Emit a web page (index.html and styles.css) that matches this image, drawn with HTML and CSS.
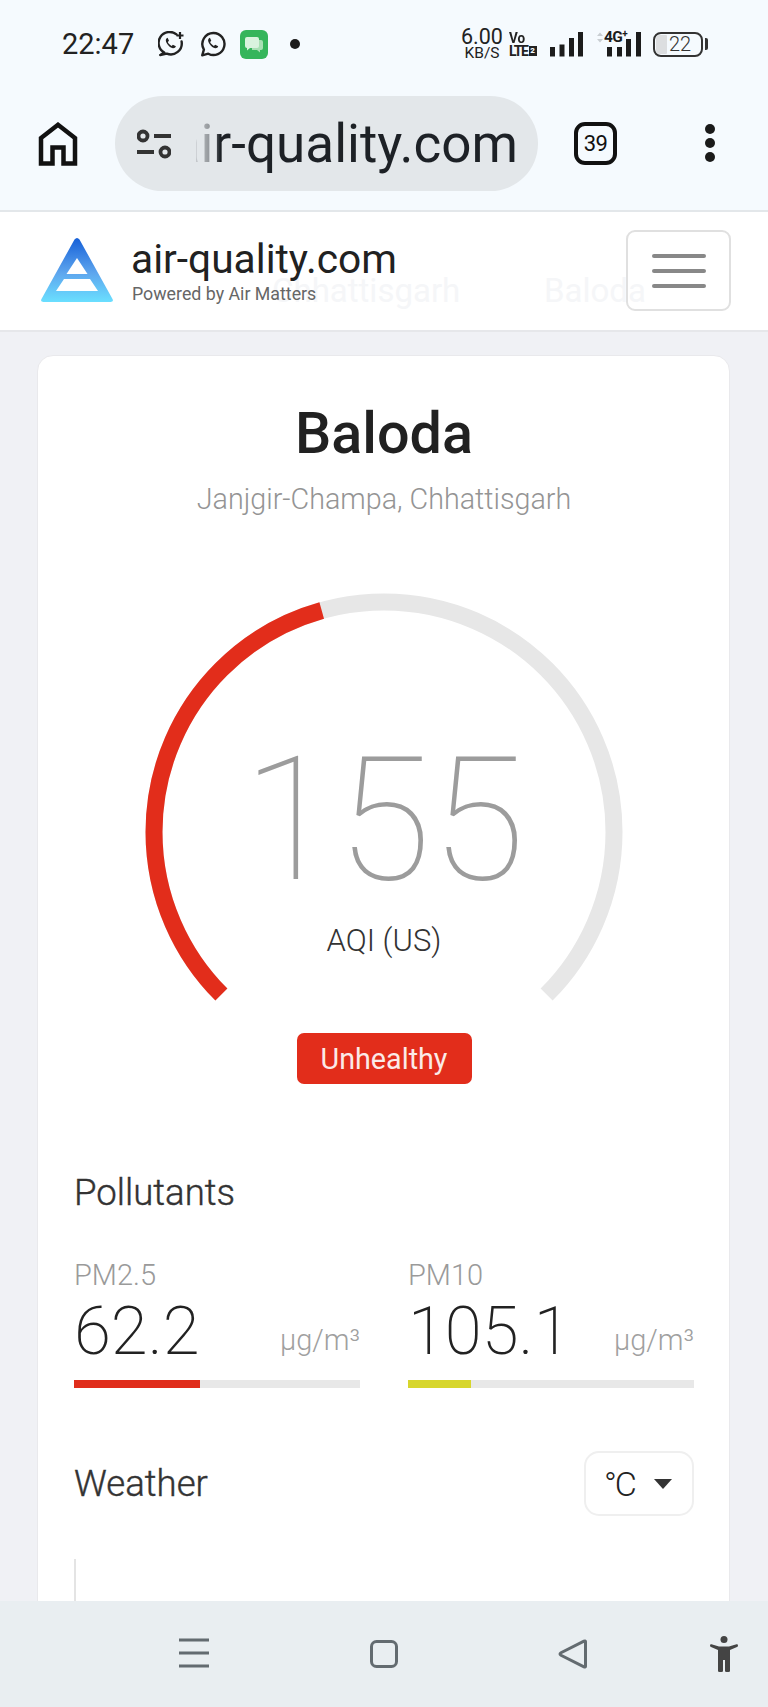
FILE: index.html
```html
<!DOCTYPE html>
<html lang="en">
<head>
<meta charset="utf-8">
<title>Baloda air quality</title>
<link rel="stylesheet" href="styles.css">
</head>
<body>
<div class="phone">
  <div class="chrome">
    <div class="status">
      <span class="time">22:47</span>
      <svg class="ic ic-chat1" viewBox="0 0 27 26"><path class="wa" d="M18.5 3.4A11 11 0 1 0 6.3 21.6L2.2 24l6.6-1.4A11 11 0 0 0 23.6 10.5"/><path class="wa-p" d="M8.7 7.2c-1.3 1-1.2 3 .4 5.600s4 4.300 5.800 4.500c1.500.1 2.800-.7 3-2l-3-1.600-1.300 1.300c-1.200-.3-3.400-2.500-3.800-3.900l1.200-1.300-1.400-3z"/><path class="wa-plus" d="M22 1v7M18.500 4.500h7"/></svg>
      <svg class="ic ic-chat2" viewBox="0 0 27 26"><path class="wa" d="M13.500 2a11 11 0 1 1-5.200 20.700L2.200 24.300l1.700-5.700A11 11 0 0 1 13.500 2z"/><path class="wa-p" d="M9 7.200c-1.300 1-1.200 3 .4 5.600s4 4.300 5.800 4.500c1.500.1 2.800-.7 3-2l-3-1.600-1.300 1.300c-1.200-.3-3.400-2.500-3.800-3.900l1.200-1.300-1.400-3z"/></svg>
      <svg class="ic ic-msg" viewBox="0 0 28 29"><rect width="28" height="29" rx="6" class="msg-bg"/><path class="msg-b" d="M12 10h9a2 2 0 0 1 2 2v6a2 2 0 0 1-2 2h-1v2.500l-3-2.500h-5z"/><path class="msg-f" d="M7 7h10a2 2 0 0 1 2 2v7a2 2 0 0 1-2 2h-7l-3 2.500V18a2 2 0 0 1-2-2V9a2 2 0 0 1 2-2z"/></svg>
      <span class="dot"></span>
      <div class="status-right">
        <div class="speed"><span class="speed-n">6.00</span><span class="speed-u">KB/S</span></div>
        <div class="volte"><span class="vo">Vo</span><span class="lte">LTE<b class="sim">2</b></span></div>
        <svg class="sig1" viewBox="0 0 35 25"><rect x="1" y="15" width="5" height="9.500"/><rect x="10.500" y="12.500" width="5" height="12"/><rect x="20" y="6" width="5" height="18.500"/><rect x="29" y="0" width="5" height="24.500"/></svg>
        <svg class="sig2" viewBox="0 0 48 25"><path class="updown" d="M3 4l3-3.500L9 4zM3 7l3 3.500L9 7z"/><text class="fourg" x="10" y="10">4G<tspan class="fourg-plus" dy="-5">+</tspan></text><rect x="13" y="15" width="5" height="9.500"/><rect x="23" y="15" width="5" height="9.500"/><rect x="32" y="7" width="5" height="17.500"/><rect x="42" y="0" width="5" height="24.500"/></svg>
        <div class="battery"><span class="batt-fill"></span><span class="batt-n">22</span></div>
        <span class="batt-nub"></span>
      </div>
    </div>
    <div class="toolbar">
      <svg class="home" viewBox="0 0 40 44"><path d="M3 41.500V16L20 2.800 37 16v25.500H25.500V25.500h-11v16z"/></svg>
      <div class="pill">
        <svg class="tune" viewBox="0 0 34 30"><circle cx="6" cy="7" r="4.500"/><path d="M17 7h17M0 23h17"/><circle cx="28" cy="23" r="4.500"/></svg>
        <div class="url"><span>air-quality.com</span></div>
      </div>
      <div class="tabs">39</div>
      <div class="kebab"><i></i><i></i><i></i></div>
    </div>
  </div>

  <header class="site">
    <span class="ghost ghost-a">Chhattisgarh</span>
    <span class="ghost ghost-b">Baloda</span>
    <svg class="logo" viewBox="0 0 72 64">
      <defs><linearGradient id="lg" x1="0" y1="0" x2="0" y2="1"><stop offset="0" stop-color="#1660d8"/><stop offset=".55" stop-color="#5ea6ee"/><stop offset="1" stop-color="#6adfff"/></linearGradient></defs>
      <path fill="url(#lg)" fill-rule="evenodd" d="M33.500 1.500q2.500-3 5 0L71.500 61q1.500 3-2 3H2.500q-3.500 0-2-3zM36 20l-10.500 16h21zM23 41l-8 12h42l-8-12z"/>
    </svg>
    <div class="brand">
      <div class="brand-name">air-quality.com</div>
      <div class="brand-sub">Powered by Air Matters</div>
    </div>
    <button class="burger" type="button" aria-label="Menu"><i></i><i></i><i></i></button>
  </header>

  <main class="page">
    <section class="card">
      <h1 class="city">Baloda</h1>
      <p class="region">Janjgir-Champa, Chhattisgarh</p>
      <div class="gauge">
        <svg class="gauge-svg" viewBox="0 0 478 410">
          <path class="arc-track" pathLength="270" d="M76.400 401.600A230 230 0 1 1 401.600 401.600"/>
          <path class="arc-value" pathLength="270" d="M76.400 401.600A230 230 0 1 1 401.600 401.600"/>
        </svg>
        <div class="gauge-num">155</div>
        <div class="gauge-label">AQI (US)</div>
      </div>
      <div class="badge-row"><span class="badge">Unhealthy</span></div>

      <h2 class="sec sec-poll">Pollutants</h2>
      <div class="poll-grid">
        <div class="poll">
          <div class="poll-name">PM2.5</div>
          <div class="poll-line"><span class="poll-val">62.2</span><span class="poll-unit">μg/m³</span></div>
          <div class="bar"><span class="bar-fill bar-red" style="width:44%"></span></div>
        </div>
        <div class="poll">
          <div class="poll-name">PM10</div>
          <div class="poll-line"><span class="poll-val">105.1</span><span class="poll-unit">μg/m³</span></div>
          <div class="bar"><span class="bar-fill bar-yellow" style="width:22%"></span></div>
        </div>
      </div>

      <div class="weather-head">
        <h2 class="sec">Weather</h2>
        <div class="select"><span class="select-v">°C</span><span class="caret"></span></div>
      </div>
      <div class="chart-axis"></div>
    </section>
  </main>

  <nav class="sysnav">
    <svg class="nv nv-menu" viewBox="0 0 30 30"><path d="M0 2h30M0 15h30M0 28h30"/></svg>
    <svg class="nv nv-home" viewBox="0 0 28 28"><rect x="1.500" y="1.500" width="25" height="25" rx="5"/></svg>
    <svg class="nv nv-back" viewBox="0 0 30 30"><path d="M27.500 2.500v25q0 1-1.500.3L3 16.300q-2-1.300 0-2.600L26 2.200q1.500-.7 1.500.3z"/></svg>
    <svg class="nv-acc" viewBox="0 0 28 36"><circle cx="14" cy="3.500" r="3.500"/><path d="M0 9.500q0-1.500 1.500-1.200L9 10.500h10l7.500-2.200q1.500-.3 1.500 1.200 0 1-1 1.500L20 14v21q0 1-1.500 1h-2q-1.500 0-1.500-1V24h-2v11q0 1-1.500 1h-2Q8 36 8 35V14l-7-3q-1-.5-1-1.500z"/></svg>
  </nav>
</div>
</body>
</html>
```

FILE: styles.css
```css
* { box-sizing: border-box; }
html, body { margin: 0; padding: 0; }
body { font-family: Roboto, "Liberation Sans", sans-serif; background: #f0f1f5; }
.phone { width: 768px; height: 1707px; display: flex; flex-direction: column; overflow: hidden; }

/* system + browser chrome */
.chrome { background: #f5fafe; height: 212px; border-bottom: 2px solid #e3e7ea; flex: none; }
.status { height: 88px; display: flex; align-items: center; padding: 0 60px 0 62px; color: #222; }
.time { font-size: 29px; width: 71px; color: #222; }
.ic { display: block; flex: none; }
.ic-chat1 { width: 27px; height: 26px; margin-left: 25px; }
.ic-chat2 { width: 27px; height: 26px; margin-left: 15px; }
.ic-msg { width: 28px; height: 29px; margin-left: 13px; }
.wa { fill: none; stroke: #222; stroke-width: 2.400; stroke-linejoin: round; stroke-linecap: round; }
.wa-p { fill: #222; }
.wa-plus { fill: none; stroke: #222; stroke-width: 2.200; }
.msg-bg { fill: #35b55b; }
.msg-b { fill: #a8e0b4; }
.msg-f { fill: #d9f3de; }
.dot { width: 10px; height: 10px; border-radius: 50%; background: #1c1c1c; margin-left: 22px; flex: none; }
.status-right { margin-left: auto; display: flex; align-items: center; }
.speed { width: 44px; display: flex; flex-direction: column; align-items: center; color: #222; }
.speed-n { font-size: 21.500px; line-height: 18px; font-weight: 400; }
.speed-u { font-size: 15.500px; line-height: 14px; }
.volte { width: 30px; margin-left: 5px; display: flex; flex-direction: column; font-weight: 700; color: #222; }
.vo { font-size: 15px; line-height: 14px; transform: scaleX(.9); transform-origin: left; }
.lte { font-size: 14px; line-height: 13px; letter-spacing: -1.300px; display: flex; align-items: center; }
.sim { font-size: 8px; line-height: 10px; width: 8px; height: 10px; margin-left: 1px; background: #222; color: #f5fafe; text-align: center; letter-spacing: 0; }
.sig1 { width: 35px; height: 25px; margin-left: 10px; fill: #1c1c1c; flex: none; }
.sig2 { width: 48px; height: 25px; margin-left: 10px; fill: #1c1c1c; flex: none; overflow: visible; }
.updown { fill: #c9ced2; }
.fourg { font-family: Roboto, sans-serif; font-weight: 700; font-size: 15.500px; letter-spacing: -.6px; fill: #1c1c1c; }
.fourg-plus { font-size: 10px; }
.battery { width: 50px; height: 25px; margin-left: 11px; border: 2px solid #333; border-radius: 8px; display: flex; align-items: center; padding-left: 1px; flex: none; }
.batt-fill { width: 11px; height: 19px; background: #dcdee0; border-radius: 4px 1px 1px 4px; flex: none; }
.batt-n { font-size: 20px; font-weight: 300; color: #333; margin-left: 2px; line-height: 20px; }
.batt-nub { width: 3px; height: 12px; background: #333; margin-left: 2px; border-radius: 0 2px 2px 0; flex: none; }

.toolbar { height: 122px; display: flex; align-items: flex-start; padding: 8px 0 0 38px; }
.home { width: 40px; height: 44px; margin-top: 26px; flex: none; fill: none; stroke: #111; stroke-width: 4.500; stroke-linejoin: miter; }
.pill { width: 423px; height: 95px; margin-left: 37px; background: #e3e7ea; border-radius: 48px; display: flex; align-items: center; padding-left: 22px; flex: none; }
.tune { width: 34px; height: 30px; flex: none; fill: none; stroke: #333; stroke-width: 3.800; }
.url { width: 322px; margin-left: 25px; height: 78px; overflow: hidden; display: flex; justify-content: flex-end; align-items: center; white-space: nowrap; font-size: 53px; color: #1d2126; -webkit-mask-image: linear-gradient(to right, rgba(0,0,0,.15) 0, rgba(0,0,0,.3) 8px, rgba(0,0,0,.45) 16px, #000 24px); mask-image: linear-gradient(to right, rgba(0,0,0,.15) 0, rgba(0,0,0,.3) 8px, rgba(0,0,0,.45) 16px, #000 24px); }
.url span { flex: none; }
.tabs { width: 43px; height: 43px; margin: 26px 0 0 36px; border: 4.500px solid #111; border-radius: 11px; display: flex; align-items: center; justify-content: center; font-size: 22px; font-weight: 400; letter-spacing: -.5px; color: #111; flex: none; }
.kebab { margin: 28px 0 0 88px; display: flex; flex-direction: column; gap: 4px; flex: none; }
.kebab i { display: block; width: 10px; height: 10px; border-radius: 50%; background: #1a1a1a; }

/* site header */
.site { height: 120px; flex: none; background: #fff; border-bottom: 2px solid #e6e7ea; display: flex; align-items: flex-start; padding: 26px 37px 0 41px; position: relative; }
.ghost { position: absolute; top: 60px; font-size: 33px; line-height: 38px; color: #f5f6f8; }
.ghost-a { left: 272px; }
.ghost-b { left: 544px; }
.logo { width: 72px; height: 64px; flex: none; position: relative; }
.brand { margin-left: 18px; position: relative; margin-top: -3px; }
.brand-name { font-size: 40.700px; line-height: 48px; color: #212121; }
.brand-sub { font-size: 17.800px; line-height: 24px; color: #666; margin-top: -1px; margin-left: 1px; }
.burger { margin-left: auto; margin-top: -8px; width: 105px; height: 81px; background: transparent; border: 2px solid #e0e0e0; border-radius: 9px; display: flex; flex-direction: column; align-items: center; justify-content: center; gap: 11px; padding: 0; position: relative; }
.burger i { display: block; width: 54px; height: 4px; border-radius: 2px; background: #888; }

/* page */
.page { flex: 1; min-height: 0; overflow: hidden; padding: 23px 38px 0 37px; }
.card { background: #fff; border: 1px solid #e9e9ec; border-radius: 16px; padding: 48px 35px 40px 36px; }
.city { margin: 0; text-align: center; font-size: 57.500px; line-height: 60px; font-weight: 500; color: #212121; }
.region { margin: 15px 0 0; text-align: center; font-size: 28.700px; line-height: 40px; font-weight: 300; color: #949494; }
.gauge { position: relative; width: 478px; height: 410px; margin: 74px auto 0; }
.gauge-svg { display: block; width: 478px; height: 410px; }
.arc-track, .arc-value { fill: none; stroke-width: 17; }
.arc-track { stroke: #e7e7e7; }
.arc-value { stroke: #e22d1b; stroke-dasharray: 119.300 400; }
.gauge-num { position: absolute; left: 0; right: 0; top: 127px; text-align: center; font-size: 172px; line-height: 200px; font-weight: 100; color: #9c9c9c; }
.gauge-label { position: absolute; left: 0; right: 0; top: 328px; text-align: center; font-size: 31px; line-height: 40px; font-weight: 300; color: #333; }
.badge-row { display: flex; justify-content: center; margin-top: 30px; }
.badge { width: 175px; height: 51px; background: #e22d1b; color: #fbeae8; border-radius: 7px; display: flex; align-items: center; justify-content: center; font-size: 28.700px; }
.sec { margin: 0; font-size: 36.600px; line-height: 40px; font-weight: 300; color: #333; -webkit-text-stroke: .4px #333; }
.sec-poll { margin-top: 89px; }
.poll-grid { display: grid; grid-template-columns: 286px 286px; column-gap: 48px; margin-top: 46px; }
.poll-name { font-size: 29px; line-height: 32px; font-weight: 300; color: #9a9a9a; }
.poll-line { display: flex; justify-content: space-between; align-items: flex-start; margin-top: 5px; height: 70px; line-height: 70px; }
.poll-val { font-size: 67px; font-weight: 200; color: #222; }
.poll-unit { font-size: 29px; line-height: 88px; font-weight: 300; color: #a0a0a0; }
.bar { height: 8px; margin-top: 14px; background: #e8e8e8; display: flex; }
.bar-fill { display: block; height: 8px; }
.bar-red { background: #e02d1b; }
.bar-yellow { background: #d7d62c; }
.weather-head { display: flex; justify-content: space-between; align-items: center; margin-top: 63px; }
.select { width: 110px; height: 65px; border: 2px solid #efefef; border-radius: 15px; display: flex; align-items: center; padding-left: 18px; }
.select-v { font-size: 34px; font-weight: 300; letter-spacing: -2px; color: #222; width: 50px; }
.caret { width: 0; height: 0; border-left: 9px solid transparent; border-right: 9px solid transparent; border-top: 10px solid #333; }
.chart-axis { width: 2px; height: 80px; margin-top: 43px; background: #e4e4e4; }

/* system nav */
.sysnav { height: 106px; flex: none; background: #e9eef1; display: flex; align-items: flex-start; padding: 35px 0 0 179px; }
.nv { display: block; flex: none; fill: none; stroke: #636b70; stroke-width: 3; }
.nv-menu { width: 30px; height: 30px; margin-top: 2px; }
.nv-home { width: 28px; height: 28px; margin-left: 161px; margin-top: 4px; }
.nv-back { width: 30px; height: 30px; margin-left: 160px; margin-top: 3px; }
.nv-acc { width: 28px; height: 36px; margin-left: 122px; fill: #444; flex: none; }
```
